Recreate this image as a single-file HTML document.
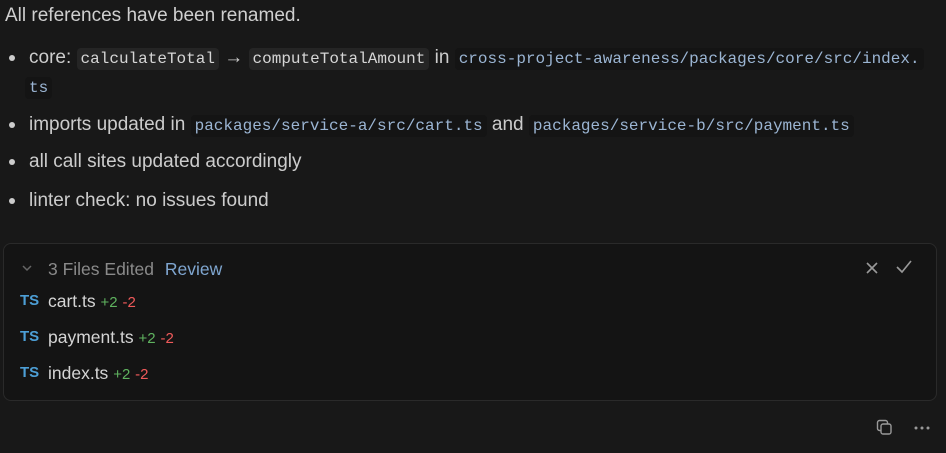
<!DOCTYPE html>
<html><head><meta charset="utf-8"><style>
body{margin:0;width:946px;height:453px;background:#181818;color:#cccccc;font-family:"Liberation Sans",sans-serif;font-size:19px;position:relative;overflow:hidden}
.l{position:absolute;white-space:nowrap;line-height:24px}
.c{font-family:"Liberation Mono",monospace;font-size:16px;background:#252525;border-radius:4px;padding:2px 4px;color:#d6d6d6}
.p{font-family:"Liberation Mono",monospace;font-size:16px;background:#141414;border-radius:4px;padding:2px 4px;color:#9bb5d3}
.dot{position:absolute;left:9px;width:6px;height:6px;border-radius:50%;background:#cccccc}
.card{position:absolute;left:3px;top:243px;width:932px;height:156px;border:1px solid #2a2a2a;border-radius:8px;background:#141414}
.ts{position:absolute;left:20px;font-weight:bold;font-size:15px;color:#4d9fd6}
.f{position:absolute;left:48px;font-size:17.5px;color:#d4d4d4}
.g{color:#5fb35f;font-size:15px}.r{color:#f05a5a;font-size:15px}
</style></head><body>
<div class="l" style="left:5px;top:4px;color:#cfcfcf">All references have been renamed.</div>
<div class="dot" style="top:55px"></div>
<div class="l" style="left:29px;top:46px">core: <span class="c">calculateTotal</span> → <span class="c">computeTotalAmount</span> in <span class="p">cross-project-awareness/packages/core/src/index.</span></div>
<div class="l" style="left:25px;top:75px"><span class="p">ts</span></div>
<div class="dot" style="top:122px"></div>
<div class="l" style="left:29px;top:113px">imports updated in <span class="p">packages/service-a/src/cart.ts</span> and <span class="p">packages/service-b/src/payment.ts</span></div>
<div class="dot" style="top:159px"></div>
<div class="l" style="left:29px;top:150px">all call sites updated accordingly</div>
<div class="dot" style="top:198px"></div>
<div class="l" style="left:29px;top:189px">linter check: no issues found</div>
<div class="card"></div>
<svg style="position:absolute;left:22px;top:264px" width="10" height="8"><path d="M1 2l4 4 4-4" stroke="#666" stroke-width="1.5" fill="none"/></svg>
<div class="l" style="left:48px;top:257px;font-size:17.5px;color:#8a8a8a">3 Files Edited <span style="color:#7fa6d0;margin-left:6px">Review</span></div>
<svg style="position:absolute;left:865px;top:261px" width="14" height="14"><path d="M2 2l10 10M12 2L2 12" stroke="#999" stroke-width="1.6"/></svg>
<svg style="position:absolute;left:896px;top:260px" width="16" height="14"><path d="M1 7l5 5 9-11" stroke="#999" stroke-width="1.6" fill="none"/></svg>
<div class="ts" style="top:292px">TS</div><div class="f" style="top:291px">cart.ts <span class="g">+2</span> <span class="r">-2</span></div>
<div class="ts" style="top:328px">TS</div><div class="f" style="top:327px">payment.ts <span class="g">+2</span> <span class="r">-2</span></div>
<div class="ts" style="top:364px">TS</div><div class="f" style="top:363px">index.ts <span class="g">+2</span> <span class="r">-2</span></div>
<svg style="position:absolute;left:876px;top:419px" width="18" height="18"><rect x="1.5" y="1.5" width="10" height="10" rx="2" stroke="#999" stroke-width="1.4" fill="none"/><rect x="5" y="5" width="10" height="10" rx="2" stroke="#999" stroke-width="1.4" fill="#181818"/></svg>
<svg style="position:absolute;left:913px;top:425px" width="18" height="6"><circle cx="3" cy="3" r="1.5" fill="#999"/><circle cx="9" cy="3" r="1.5" fill="#999"/><circle cx="15" cy="3" r="1.5" fill="#999"/></svg>
</body></html>
